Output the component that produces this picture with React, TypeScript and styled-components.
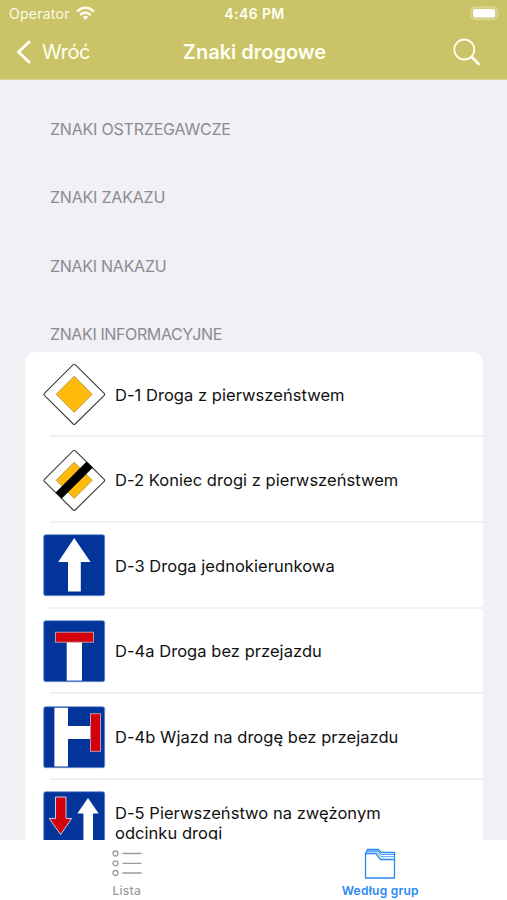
import React from "react";
import styled, { createGlobalStyle } from "styled-components";

const GlobalStyle = createGlobalStyle`
  * { box-sizing: border-box; }
  body { margin: 0; font-family: Inter, "Liberation Sans", sans-serif; }
`;

const Screen = styled.main`
  width: 507px;
  height: 900px;
  display: flex;
  flex-direction: column;
  overflow: hidden;
  background: #f0f0f5;
`;

const Header = styled.header`
  height: 80px;
  flex: none;
  color: #fffff2;
  background: #cac367;
  border-bottom: 1px solid #d5d09a;
`;

const StatusBar = styled.div`
  height: 27px;
  display: grid;
  grid-template-columns: 1fr auto 1fr;
  align-items: center;
  padding: 0 7px 0 9px;
`;

const Carrier = styled.div`
  display: flex;
  align-items: center;
  gap: 6px;
  font-size: 14px;
  letter-spacing: 0.25px;
  opacity: 0.95;
`;

const Clock = styled.div`
  font-size: 14px;
  font-weight: 600;
  letter-spacing: 0.4px;
`;

const Battery = styled.svg`
  justify-self: end;
`;

const NavBar = styled.div`
  height: 52px;
  display: grid;
  grid-template-columns: 1fr auto 1fr;
  align-items: center;
  padding: 0 26px 2px 16px;
`;

const BackButton = styled.button`
  display: flex;
  align-items: center;
  gap: 10px;
  padding: 0;
  border: 0;
  background: none;
  color: inherit;
  font: 400 20px/24px Inter, sans-serif;
  letter-spacing: -0.4px;
`;

const Title = styled.h1`
  margin: 0 0 0 12px;
  font-size: 20px;
  line-height: 24px;
  font-weight: 600;
`;

const SearchButton = styled.button`
  justify-self: end;
  display: flex;
  padding: 0;
  border: 0;
  background: none;
  color: inherit;
`;

const Content = styled.div`
  flex: 1;
  min-height: 0;
  overflow: hidden;
  padding: 0 24px 0 25px;
`;

const SectionHeading = styled.h2<{ $spacing?: number }>`
  margin: 0;
  height: 68.4px;
  padding: 39px 0 0 25px;
  font-size: 16px;
  line-height: 20px;
  font-weight: 400;
  letter-spacing: ${(p) => p.$spacing ?? -0.2}px;
  color: #8b8b90;
`;

const Card = styled.ul`
  margin: -2px 0 0;
  padding: 0.2px 0 0;
  list-style: none;
  border-radius: 11px;
  background: #fff;
  overflow: hidden;
`;

const Row = styled.li`
  height: 85.65px;
  display: flex;
  align-items: center;
  gap: 9px;
  padding-left: 18px;
  background: linear-gradient(#f1f1f3, #f1f1f3) 25px 100% / 100% 2px no-repeat;
`;

const SignImage = styled.svg`
  flex: none;
  width: 63px;
  height: 63px;
`;

const RowLabel = styled.span`
  width: 300px;
  font-size: 16.5px;
  line-height: 20px;
  letter-spacing: 0.04px;
  color: #111;
`;

const TabBar = styled.nav`
  height: 60px;
  flex: none;
  display: grid;
  grid-template-columns: 1fr 1fr;
  background: #fff;
`;

const Tab = styled.button<{ $active?: boolean }>`
  display: flex;
  flex-direction: column;
  align-items: center;
  gap: 4px;
  padding: 7px 0 0;
  border: 0;
  background: none;
  color: ${(p) => (p.$active ? "#2a8af2" : "#9b9b9b")};
  font: ${(p) => (p.$active ? 600 : 500)} 12px/15px Inter, sans-serif;
  letter-spacing: ${(p) => (p.$active ? 0.25 : 0.3)}px;
`;

const BluePanel = () => (
  <rect x=".7" y=".7" width="61" height="61" rx="2" fill="#02349a" stroke="#6b8fce" strokeWidth=".8" />
);

const Diamond = () => (
  <>
    <path d="M30.2 1.6Q31.2.8 32.2 1.6L61.2 30.4Q62 31.4 61.2 32.4L32.2 61Q31.2 61.8 30.2 61L1.4 32.4Q.6 31.4 1.4 30.4Z" fill="#fff" stroke="#3d3d3d" strokeWidth="1.1" />
    <path d="M31.2 13.2 49.2 31.3 31.2 49.4 13.2 31.3Z" fill="#ffba0b" stroke="#ad8c38" strokeWidth=".8" />
  </>
);

const signs: { id: string; label: string; art: React.ReactNode }[] = [
  { id: "D-1", label: "D-1 Droga z pierwszeństwem", art: <Diamond /> },
  {
    id: "D-2",
    label: "D-2 Koniec drogi z pierwszeństwem",
    art: (
      <>
        <Diamond />
        <path d="M43.6 12.4 49.9 18.4 18.8 49.5 12.6 43.5Z" fill="#000" />
      </>
    ),
  },
  {
    id: "D-3",
    label: "D-3 Droga jednokierunkowa",
    art: (
      <>
        <BluePanel />
        <path d="M31.2 4 47.5 28H37.8V57.5H25V28H15.2Z" fill="#fff" />
      </>
    ),
  },
  {
    id: "D-4a",
    label: "D-4a Droga bez przejazdu",
    art: (
      <>
        <BluePanel />
        <path d="M23.7 22H39V60.6H23.7Z" fill="#fff" />
        <rect x="12.5" y="12.2" width="38" height="10" fill="#d4000b" stroke="#c9a5b3" strokeWidth=".9" />
      </>
    ),
  },
  {
    id: "D-4b",
    label: "D-4b Wjazd na drogę bez przejazdu",
    art: (
      <>
        <BluePanel />
        <path d="M11.4 1.8H25V20H47V33H25V60.6H11.4Z" fill="#fff" />
        <rect x="47.5" y="7.7" width="10" height="37.6" fill="#d4000b" stroke="#c9a5b3" strokeWidth=".9" />
      </>
    ),
  },
  {
    id: "D-5",
    label: "D-5 Pierwszeństwo na zwężonym odcinku drogi",
    art: (
      <>
        <BluePanel />
        <path d="M12.5 6H23V27.5H28.7L17.6 43.5 6.3 27.5H12.5Z" fill="#d4000b" stroke="#c5cfe2" strokeWidth="1" />
        <path d="M45 7 55.7 22.5H50V55H40.4V22.5H34.3Z" fill="#fff" />
      </>
    ),
  },
];

export default function App() {
  return (
    <>
      <GlobalStyle />
      <Screen>
        <Header>
          <StatusBar>
            <Carrier>
              Operator
              <svg width="19" height="15" viewBox="0 0 19 15" fill="none" stroke="currentColor" strokeWidth="2.5">
                <path d="M1 5.5Q9.5-2 18 5.5" />
                <path d="M4.2 9Q9.5 4.3 14.8 9" />
                <path d="M9.5 14 6.6 11Q9.5 8.6 12.4 11Z" fill="currentColor" stroke="none" />
              </svg>
            </Carrier>
            <Clock>4:46 PM</Clock>
            <Battery width="30" height="15" viewBox="0 0 30 15">
              <rect x=".9" y="1" width="26.5" height="12.5" rx="4" fill="#d2cc7e" stroke="#e0db9f" />
              <rect x="3.1" y="3" width="22" height="8.6" rx="2" fill="#fff" />
              <path d="M28.6 5.5Q30.2 7.2 28.6 9Z" fill="#e5e0a7" />
            </Battery>
          </StatusBar>
          <NavBar>
            <BackButton>
              <svg width="16" height="24" viewBox="0 0 16 24" fill="none" stroke="currentColor" strokeWidth="2.9" strokeLinecap="round" strokeLinejoin="round">
                <path d="M13 2 2.5 12 13 22" />
              </svg>
              Wróć
            </BackButton>
            <Title>Znaki drogowe</Title>
            <SearchButton aria-label="Szukaj">
              <svg width="28" height="28" viewBox="0 0 28 28" fill="none" stroke="currentColor" strokeLinecap="round">
                <circle cx="11.3" cy="11.5" r="10" strokeWidth="1.8" />
                <path d="m18.7 19 7 7" strokeWidth="2.5" />
              </svg>
            </SearchButton>
          </NavBar>
        </Header>
        <Content>
          <SectionHeading>ZNAKI OSTRZEGAWCZE</SectionHeading>
          <SectionHeading>ZNAKI ZAKAZU</SectionHeading>
          <SectionHeading $spacing={-0.27}>ZNAKI NAKAZU</SectionHeading>
          <SectionHeading $spacing={-0.38}>ZNAKI INFORMACYJNE</SectionHeading>
          <Card>
            {signs.map((s) => (
              <Row key={s.id}>
                <SignImage viewBox="0 0 63 63">{s.art}</SignImage>
                <RowLabel>{s.label}</RowLabel>
              </Row>
            ))}
          </Card>
        </Content>
        <TabBar>
          <Tab>
            <svg width="32" height="32" viewBox="0 0 32 32" fill="none" stroke="currentColor" strokeWidth="1.3">
              <circle cx="4.5" cy="6.5" r="2.5" />
              <circle cx="4.5" cy="16.3" r="2.5" />
              <circle cx="4.5" cy="26" r="2.5" />
              <path d="M11.5 6.5h19M11.5 16.3h19M11.5 26h19" />
            </svg>
            Lista
          </Tab>
          <Tab $active>
            <svg width="32" height="32" viewBox="0 0 32 32" fill="none" stroke="currentColor" strokeWidth="1.3" strokeLinejoin="round">
              <path d="M1.5 6.5H12L16.5 12.5H30.5V31H1.5Z" />
              <path d="M1.5 6.5 3.5 2.5H14.5L17 5.5H30.5V12.5" />
              <path d="M2.5 4.7H13.3L17 9.7H30.5M3 3.8H14L17 7.5H30.5" strokeWidth=".8" />
            </svg>
            Według grup
          </Tab>
        </TabBar>
      </Screen>
    </>
  );
}
